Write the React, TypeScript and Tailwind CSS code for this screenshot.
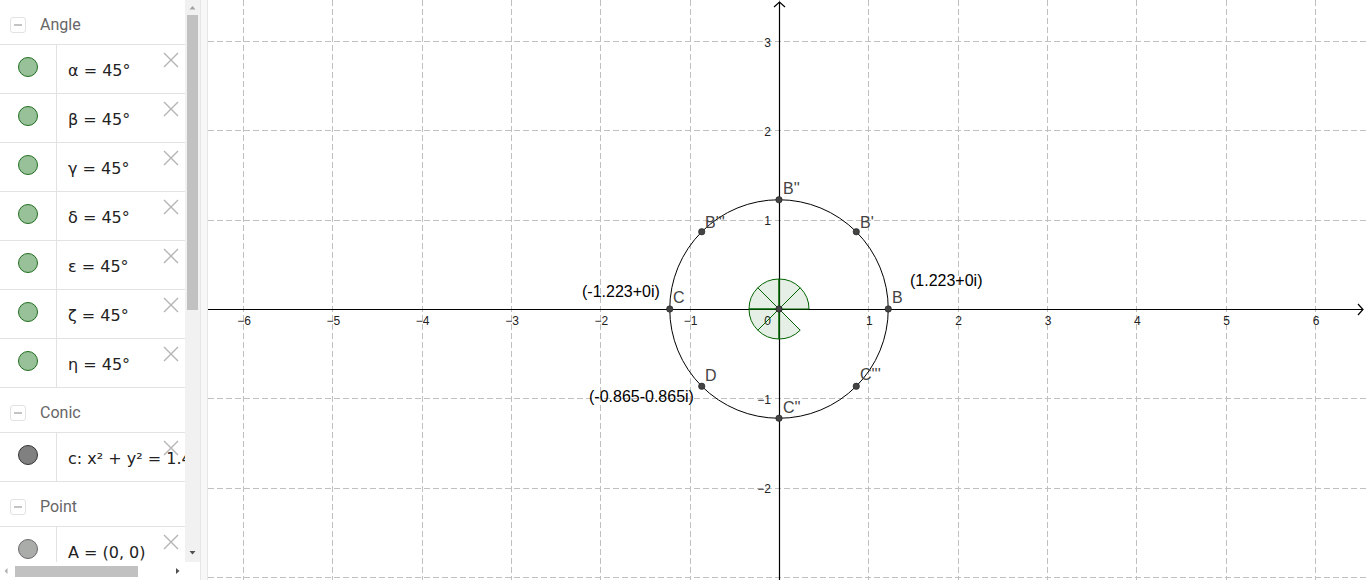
import React from "react";

const ANGLES = ["α", "β", "γ", "δ", "ε", "ζ", "η"];

// graphics view: origin + pixels per unit
const OX = 571;
const OY = 309;
const U = 89.33;
const px = (v: number) => OX + v * U;
const py = (v: number) => OY - v * U;

const R = 1.223;
const S = 0.865;
const POINTS: [number, number][] = [
  [R, 0],
  [S, S],
  [0, R],
  [-S, S],
  [-R, 0],
  [-S, -S],
  [0, -R],
  [S, -S],
  [0, 0],
];

// label positions in view pixels (left x, baseline y)
const LABELS: { t: string; x: number; y: number }[] = [
  { t: "B''", x: 575, y: 194 },
  { t: "B'''", x: 497, y: 228 },
  { t: "B'", x: 652, y: 228 },
  { t: "C", x: 465, y: 303 },
  { t: "B", x: 684, y: 303 },
  { t: "D", x: 497, y: 381 },
  { t: "C'''", x: 652, y: 380 },
  { t: "C''", x: 575, y: 413 },
];

const VALUES: { t: string; x: number; y: number }[] = [
  { t: "(1.223+0i)", x: 702, y: 286 },
  { t: "(-1.223+0i)", x: 374, y: 297 },
  { t: "(-0.865-0.865i)", x: 381, y: 402 },
];

function CloseX() {
  return (
    <svg
      width="16"
      height="16"
      viewBox="0 0 16 16"
      className="absolute left-[163px] top-[7px]"
    >
      <path d="M1 1 L15 15 M15 1 L1 15" stroke="#b4b4b4" strokeWidth="1.4" />
    </svg>
  );
}

function GroupHeader({ title }: { title: string }) {
  return (
    <div className="flex h-[45px] shrink-0 items-center border-b border-[#e2e2e2] pl-[10px] pt-[6px]">
      <div className="flex h-4 w-4 items-center justify-center rounded-[3px] border border-[#e2e2e2]">
        <div className="h-[1.5px] w-2 bg-[#c4c4c4]" />
      </div>
      <span className="ml-[14px] font-['Roboto',sans-serif] text-[16px] text-[#666]">
        {title}
      </span>
    </div>
  );
}

function ItemRow({
  fill,
  border,
  children,
}: {
  fill: string;
  border: string;
  children: React.ReactNode;
}) {
  return (
    <div className="relative flex h-[49px] shrink-0 border-b border-[#e2e2e2]">
      <div className="flex w-[57px] shrink-0 justify-center border-r border-[#e2e2e2] pt-[12px]">
        <div className={`h-5 w-5 rounded-full border ${fill} ${border}`} />
      </div>
      <div className="whitespace-nowrap pl-[11px] pt-[16px] font-['DejaVu_Sans',sans-serif] text-[16px] leading-[19px] text-[#222]">
        {children}
      </div>
      <CloseX />
    </div>
  );
}

function AlgebraView() {
  return (
    <div className="flex h-full w-[200px] shrink-0 flex-col bg-white">
      <div className="flex h-[562px] shrink-0">
        <div className="flex w-[185px] shrink-0 flex-col overflow-hidden">
          <GroupHeader title="Angle" />
          {ANGLES.map((a) => (
            <ItemRow key={a} fill="bg-[#99c199]" border="border-[#1f6e1f]">
              {a} = 45°
            </ItemRow>
          ))}
          <GroupHeader title="Conic" />
          <ItemRow fill="bg-[#808080]" border="border-[#333]">
            c: x² + y² = 1.496
          </ItemRow>
          <GroupHeader title="Point" />
          <ItemRow fill="bg-[#a9aca9]" border="border-[#6a6a6a]">
            A = (0, 0)
          </ItemRow>
        </div>
        <div className="relative flex w-[15px] flex-col bg-[#f1f1f1]">
          <svg width="15" height="15" viewBox="0 0 15 15" className="shrink-0">
            <path d="M4.5 9.5 L10.5 9.5 L7.5 6 Z" fill="#a3a3a3" />
          </svg>
          <div className="ml-[2px] h-[295px] w-[11px] bg-[#c1c1c1]" />
          <div className="flex-1" />
          <svg width="15" height="15" viewBox="0 0 15 15" className="shrink-0">
            <path d="M4.5 4 L10.5 4 L7.5 7.5 Z" fill="#505050" />
          </svg>
        </div>
      </div>
      <div className="flex h-[18px] w-[185px] items-center">
        <svg width="15" height="18" viewBox="0 0 15 18" className="shrink-0">
          <path d="M7.5 6 L7.5 12 L4.5 9 Z" fill="#b0b0b0" />
        </svg>
        <div className="h-[11px] w-[123px] bg-[#c1c1c1]" />
        <div className="flex-1" />
        <svg width="15" height="18" viewBox="0 0 15 18" className="shrink-0">
          <path d="M6 6 L6 12 L9.5 9 Z" fill="#505050" />
        </svg>
      </div>
    </div>
  );
}

function GraphicsView() {
  const xs = [-6, -5, -4, -3, -2, -1, 1, 2, 3, 4, 5, 6];
  const ys = [-3, -2, -1, 1, 2, 3];
  const r = 30;
  const sectors = Array.from({ length: 7 }, (_, i) => {
    const a0 = (i * Math.PI) / 4;
    const a1 = ((i + 1) * Math.PI) / 4;
    const x0 = OX + r * Math.cos(a0);
    const y0 = OY - r * Math.sin(a0);
    const x1 = OX + r * Math.cos(a1);
    const y1 = OY - r * Math.sin(a1);
    return `M${OX} ${OY} L${x0} ${y0} A${r} ${r} 0 0 0 ${x1} ${y1} Z`;
  });

  return (
    <svg width="1158" height="580" viewBox="0 0 1158 580" className="block shrink-0">
      <rect width="1158" height="580" fill="#fff" />
      <g stroke="#c0c0c0" strokeWidth="1" strokeDasharray="6 3">
        {[...xs, 0].map((v) => (
          <line key={"gx" + v} x1={Math.round(px(v)) + 0.5} y1={0} x2={Math.round(px(v)) + 0.5} y2={580} />
        ))}
        {ys.map((v) => (
          <line key={"gy" + v} x1={0} y1={Math.round(py(v)) + 0.5} x2={1158} y2={Math.round(py(v)) + 0.5} />
        ))}
      </g>
      {/* axes */}
      <g stroke="#000" strokeWidth="1.2" fill="none">
        <line x1={0} y1={OY + 0.5} x2={1155} y2={OY + 0.5} />
        <line x1={OX + 0.5} y1={2} x2={OX + 0.5} y2={580} />
        <path d="M1150 304 L1155 309.5 L1150 315" />
        <path d="M566 7 L571.5 2 L577 7" />
      </g>
      <g fontFamily="'Liberation Sans', Arial, sans-serif" fontSize="12" fill="#222">
        {xs.map((v) => (
          <text key={"tx" + v} x={px(v) + 1} y={325} textAnchor="middle">
            {v < 0 ? "−" + -v : v}
          </text>
        ))}
        {ys
          .filter((v) => v > -3)
          .map((v) => (
            <text key={"ty" + v} x={563} y={py(v) + 5.5} textAnchor="end">
              {v < 0 ? "−" + -v : v}
            </text>
          ))}
        <text x={563} y={325} textAnchor="end">
          0
        </text>
      </g>
      {/* angles */}
      <g fill="rgba(0,100,0,0.1)" stroke="#006400" strokeWidth="1">
        {sectors.map((d, i) => (
          <path key={i} d={d} />
        ))}
      </g>
      <circle cx={OX} cy={OY} r={R * U} fill="none" stroke="#000" strokeWidth="1" />
      {POINTS.map(([x, y], i) => (
        <circle key={i} cx={px(x)} cy={py(y)} r={3.2} fill="#444" stroke="#222" strokeWidth="0.6" />
      ))}
      <g fontFamily="'Liberation Sans', Arial, sans-serif" fontSize="16" fill="#444">
        {LABELS.map((l) => (
          <text key={l.t} x={l.x} y={l.y}>
            {l.t}
          </text>
        ))}
      </g>
      <g fontFamily="'Liberation Sans', Arial, sans-serif" fontSize="16" fill="#000">
        {VALUES.map((l) => (
          <text key={l.t} x={l.x} y={l.y}>
            {l.t}
          </text>
        ))}
      </g>
    </svg>
  );
}

export default function App() {
  return (
    <div className="flex h-[580px] w-[1366px] overflow-hidden bg-white">
      <AlgebraView />
      <div className="h-full w-[8px] shrink-0 border-x border-[#e6e6e6] bg-[#f7f7f7]" />
      <GraphicsView />
    </div>
  );
}
